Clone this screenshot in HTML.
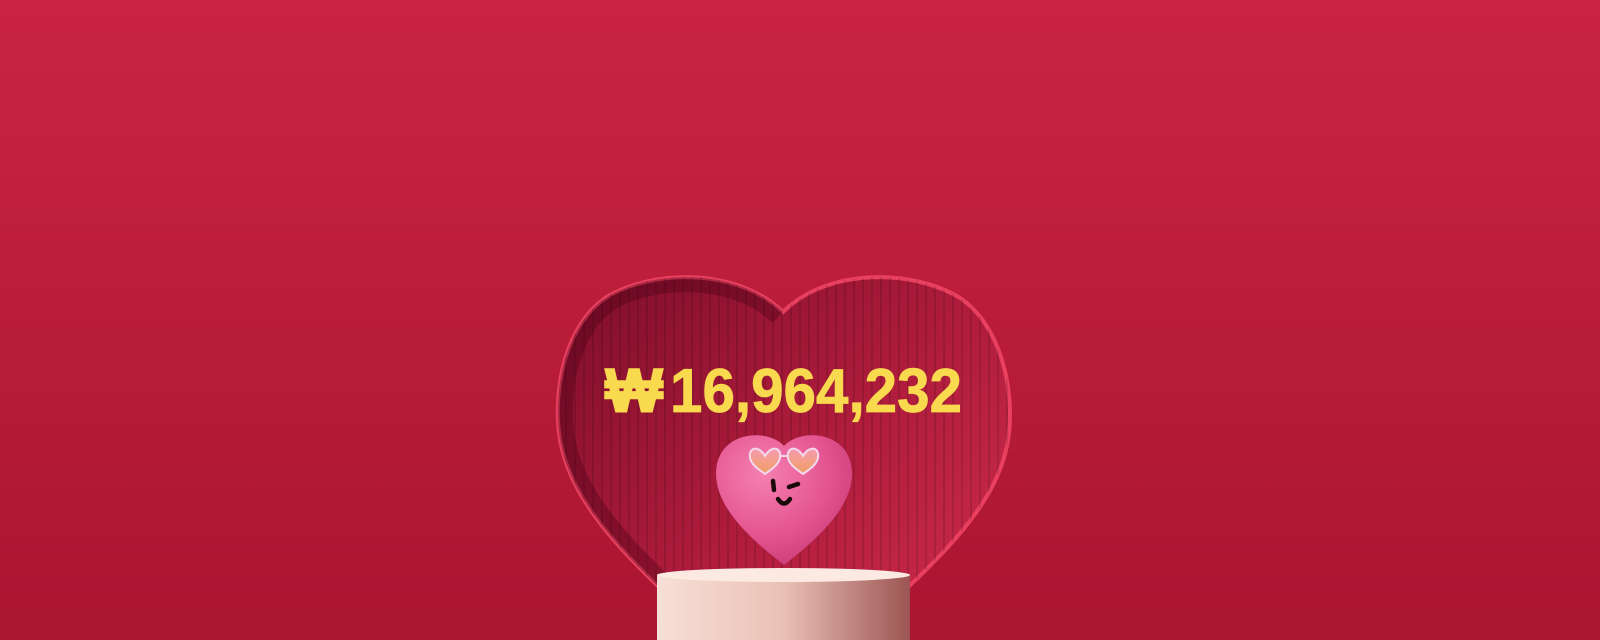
<!DOCTYPE html>
<html><head><meta charset="utf-8"><style>
html,body{margin:0;padding:0;width:1600px;height:640px;overflow:hidden}
svg{display:block}
</style></head><body>
<svg width="1600" height="640" viewBox="0 0 1600 640" xmlns="http://www.w3.org/2000/svg">
<defs>
<linearGradient id="bg" x1="0" y1="0" x2="0" y2="1"><stop offset="0" stop-color="#c92443"/><stop offset="1" stop-color="#aa1530"/></linearGradient>
<linearGradient id="inner" x1="0" y1="0" x2="1" y2="1"><stop offset="0" stop-color="#7e0e2a"/><stop offset="0.5" stop-color="#b01c3c"/><stop offset="1" stop-color="#d4304f"/></linearGradient>
<pattern id="stripes" width="9" height="10" patternUnits="userSpaceOnUse"><rect x="7" width="2" height="10" fill="rgba(0,0,0,0.12)"/></pattern>
<radialGradient id="ph" cx="0.35" cy="0.3" r="0.8"><stop offset="0" stop-color="#f580b0"/><stop offset="0.6" stop-color="#e45490"/><stop offset="1" stop-color="#c53a74"/></radialGradient>
<linearGradient id="pod" x1="0" y1="0" x2="1" y2="0"><stop offset="0" stop-color="#f7e0d8"/><stop offset="0.5" stop-color="#eac0b5"/><stop offset="1" stop-color="#9c5552"/></linearGradient>
<linearGradient id="lens" x1="0" y1="0" x2="0" y2="1"><stop offset="0" stop-color="#f59bb0"/><stop offset="1" stop-color="#f0a060"/></linearGradient>
<clipPath id="hc"><path d="M783,312 C740,270 660,268 610,295 C565,322 552,390 560,440 C575,520 650,580 783,700 C916,580 995,520 1008,440 C1016,390 1000,320 955,295 C905,268 825,270 783,312 Z"/></clipPath>
</defs>
<rect width="1600" height="640" fill="url(#bg)"/>
<path d="M783,312 C740,270 660,268 610,295 C565,322 552,390 560,440 C575,520 650,580 783,700 C916,580 995,520 1008,440 C1016,390 1000,320 955,295 C905,268 825,270 783,312 Z" fill="url(#inner)" stroke="#e8405e" stroke-width="4"/>
<g clip-path="url(#hc)"><rect x="540" y="260" width="500" height="400" fill="url(#stripes)"/>
<path d="M783,312 C740,270 660,268 610,295 C565,322 552,390 560,440 C575,520 650,580 783,700" fill="none" stroke="rgba(70,0,20,0.35)" stroke-width="30"/></g>
<text x="605" y="412" font-family="Liberation Sans, sans-serif" font-weight="bold" font-size="62" fill="#f9da4e" stroke="#f9da4e" stroke-width="1.5" textLength="58" lengthAdjust="spacingAndGlyphs">₩</text>
<text x="670" y="412" font-family="Liberation Sans, sans-serif" font-weight="bold" font-size="62" fill="#f9da4e" stroke="#f9da4e" stroke-width="0.8" textLength="292" lengthAdjust="spacingAndGlyphs">16,964,232</text>
<path d="M784,446 C768,428 718,430 716,472 C715,508 752,540 784,565 C816,540 853,508 852,472 C850,430 800,428 784,446 Z" fill="url(#ph)"/>
<g stroke="#f4d8f0" stroke-width="2" fill="url(#lens)">
<path d="M765,456 C758,444 748,448 750,458 C752,466 760,470 765,474 C770,470 778,466 780,458 C782,448 772,444 765,456Z"/>
<path d="M803,456 C796,444 786,448 788,458 C790,466 798,470 803,474 C808,470 816,466 818,458 C820,448 810,444 803,456Z"/>
<path d="M780,456 L788,456" fill="none"/></g>
<g stroke="#1a0a0a" stroke-width="4.5" stroke-linecap="round" fill="none">
<path d="M773,481 L774,490"/><path d="M789,487 L798,484"/><path d="M778,499 Q784,508 790,499"/></g>
<ellipse cx="784" cy="574" rx="40" ry="4" fill="rgba(0,0,0,0.15)"/>
<rect x="657" y="575" width="253" height="70" fill="url(#pod)"/>
<ellipse cx="783.5" cy="575" rx="126.5" ry="7" fill="#fbe9e2"/>
</svg>
</body></html>
